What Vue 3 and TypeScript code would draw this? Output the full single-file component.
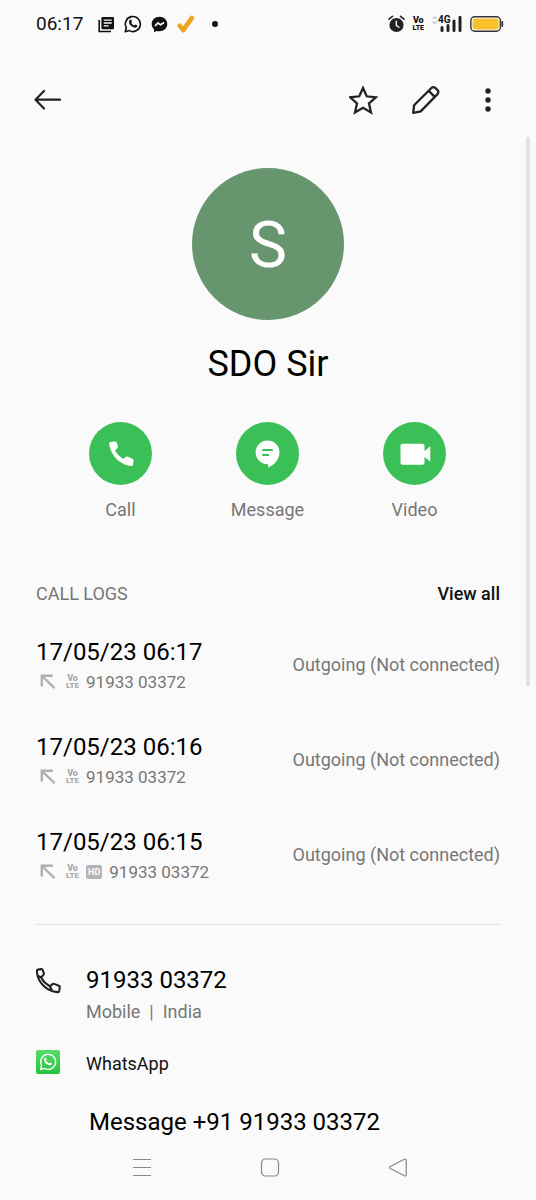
<script setup lang="ts">
interface CallLog {
  id: number
  time: string
  number: string
  hd: boolean
  result: string
}

const contact = { name: 'SDO Sir', initial: 'S', number: '91933 03372', kind: 'Mobile', region: 'India' }

const logs: CallLog[] = [
  { id: 1, time: '17/05/23 06:17', number: '91933 03372', hd: false, result: 'Outgoing (Not connected)' },
  { id: 2, time: '17/05/23 06:16', number: '91933 03372', hd: false, result: 'Outgoing (Not connected)' },
  { id: 3, time: '17/05/23 06:15', number: '91933 03372', hd: true, result: 'Outgoing (Not connected)' },
]
</script>

<template>
  <div class="screen">
    <div class="status">
      <span class="clock">06:17</span>
      <div class="notices">
        <svg width="17" height="17" viewBox="0 0 17 17" aria-hidden="true">
          <path d="M1.2 4v11.5H13" fill="none" stroke="#111" stroke-width="1.6" />
          <rect x="3.4" y="1" width="12.6" height="12.2" rx="1" fill="#111" />
          <path d="M5.7 4.2h8M5.7 7h8M5.7 9.8h5" stroke="#fafafa" stroke-width="1.3" />
        </svg>
        <svg width="18" height="18" viewBox="0 0 18 18" aria-hidden="true">
          <path d="M1.2 16.8l1.1-4.1a7.5 7.5 0 1 1 2.9 2.9z" fill="none" stroke="#111" stroke-width="1.6" stroke-linejoin="round" />
          <path d="M6.1 4.8c.5-.4 1-.3 1.2.2l.6 1.4c.1.4-.6 1-.6 1.3.7 1.4 1.7 2.2 3 2.8.4 0 .9-1 1.3-.9l1.6.8c.3.3.1 1.2-.4 1.7-1.2 1-3 .8-4.8-.5C6.2 10.300 5 8.600 5 7c0-.9.5-1.7 1.1-2.2z" fill="#111" />
        </svg>
        <svg width="17" height="17" viewBox="0 0 17 17" aria-hidden="true">
          <path d="M8.5.8C4 .8.7 4 .7 8.100c0 2.200.9 4.100 2.400 5.400v2.800l2.600-1.400c.9.3 1.8.4 2.800.4 4.400 0 7.800-3.100 7.800-7.200S12.900.8 8.500.8z" fill="#111" />
          <path d="M4 10l3-3.200 2.500 2 3.600-2.300" fill="none" stroke="#fafafa" stroke-width="1.7" stroke-linejoin="round" />
        </svg>
        <svg width="18" height="18" viewBox="0 0 18 18" aria-hidden="true">
          <path d="M2.700 10.700l3.500 4.500L14.800 3" fill="none" stroke="#f0a31c" stroke-width="4.600" stroke-linecap="round" stroke-linejoin="round" />
        </svg>
        <span class="dot"></span>
      </div>
      <div class="device">
        <svg width="17" height="18" viewBox="0 0 17 18" aria-hidden="true">
          <circle cx="8.5" cy="10" r="7.100" fill="#222" />
          <path d="M1 4.200L4.500 1.300M16 4.200l-3.500-2.900" stroke="#222" stroke-width="1.600" stroke-linecap="round" />
          <path d="M8.300 6.300v4l2.600 2" fill="none" stroke="#fafafa" stroke-width="1.400" stroke-linecap="round" />
        </svg>
        <span class="volte"><span class="vo">Vo</span><span>LTE</span></span>
        <span class="signal">
          <svg width="30" height="18" viewBox="0 0 30 18" aria-hidden="true">
            <path d="M.8 4l2-2 2 2M.8 6.500l2 2 2-2" fill="none" stroke="#c4c4c4" stroke-width="1.100" />
            <path d="M10 12.500v3M16 10.500v5M22 6v9.500M28 2.200v13.300" stroke="#222" stroke-width="3" stroke-linecap="round" />
          </svg>
          <span class="network">4G</span>
        </span>
        <svg width="34" height="16" viewBox="0 0 34 16" aria-hidden="true">
          <rect x=".8" y=".8" width="29.600" height="14.400" rx="4" fill="#fafafa" stroke="#333" stroke-width="1.400" />
          <rect x="2.600" y="2.600" width="26" height="10.800" rx="2.400" fill="#fbc02d" />
          <path d="M32.300 6v4" stroke="#333" stroke-width="1.800" stroke-linecap="round" />
        </svg>
      </div>
    </div>

    <header class="toolbar">
      <button class="tool" type="button" aria-label="Back">
        <svg width="28" height="28" viewBox="0 0 28 28">
          <path d="M27 13.700H3M11 5L2.500 13.700l8.500 8.700" fill="none" stroke="#222" stroke-width="2.200" stroke-linecap="round" stroke-linejoin="round" />
        </svg>
      </button>
      <div class="tools">
        <button class="tool" type="button" aria-label="Add to favourites">
          <svg width="30" height="30" viewBox="1 0 30 30">
            <path d="M15 3l3.700 8.300 9.100 1-6.800 6.100 2 9L15 22.800l-8 4.600 2-9-6.800-6.100 9.100-1z" fill="none" stroke="#222" stroke-width="2.300" />
          </svg>
        </button>
        <button class="tool" type="button" aria-label="Edit contact">
          <svg width="30" height="30" viewBox="0 0 30 30">
            <path d="M2.200 27.800l.9-7.500L20.400 3q2-1.700 4 0l2.100 2.100q1.700 2 0 4L9.700 26.400zM17.700 5.900l6 6" fill="none" stroke="#222" stroke-width="2.300" stroke-linejoin="round" />
          </svg>
        </button>
        <button class="tool" type="button" aria-label="More options">
          <svg width="30" height="30" viewBox="0 0 30 30" fill="#222">
            <circle cx="15" cy="6" r="2.700" /><circle cx="15" cy="15" r="2.700" /><circle cx="15" cy="24" r="2.700" />
          </svg>
        </button>
      </div>
    </header>

    <main class="content">
      <div class="avatar" aria-hidden="true">{{ contact.initial }}</div>
      <h1 class="name">{{ contact.name }}</h1>

      <div class="actions">
        <button class="action" type="button">
          <span class="disc">
            <svg width="30" height="30" viewBox="0 0 30 30" aria-hidden="true">
              <path d="M3.200 4.800c-.2-1.300.3-1.800 1.500-1.900l4-.4c1.200 0 1.800.5 2.200 1.600l.9 3c.3 1 0 1.800-.7 2.500l-2 2c2 3.600 4.600 6.200 8 8.300l2.800-2c.8-.5 1.500-.5 2.300-.1l4.500 2.200c.8.5 1 1 .9 1.900l-.5 3.600c-.2 1-.7 1.500-1.800 1.400C14.500 26.400 4.500 16.500 3.200 4.800z" fill="#fff" />
            </svg>
          </span>
          <span>Call</span>
        </button>
        <button class="action" type="button">
          <span class="disc">
            <svg width="30" height="30" viewBox="0 0 30 30" aria-hidden="true">
              <path d="M14.500 1.500A11.800 11.800 0 0 0 14.500 25.200h.7v3.300c6.200-2.500 11.300-8.200 11.300-15.200A11.900 11.900 0 0 0 14.500 1.500z" fill="#fff" />
              <path d="M9.200 11H19.800M9.200 16h6.800" stroke="#3bc057" stroke-width="2.200" />
            </svg>
          </span>
          <span>Message</span>
        </button>
        <button class="action" type="button">
          <span class="disc">
            <svg width="32" height="30" viewBox="0 0 32 30" aria-hidden="true">
              <rect x="1.500" y="4.800" width="24" height="21" rx="2" fill="#fff" />
              <path d="M25 12.500l6.300-5.300v15.600L25 17.500z" fill="#fff" />
            </svg>
          </span>
          <span>Video</span>
        </button>
      </div>

      <section class="logs">
        <div class="logs-head">
          <h2>CALL LOGS</h2>
          <a href="#all">View all</a>
        </div>
        <ul class="log-list">
          <li v-for="log in logs" :key="log.id" class="log">
            <div>
              <div class="primary">{{ log.time }}</div>
              <div class="meta">
                <svg class="direction" width="16" height="16" viewBox="0 0 16 16" aria-hidden="true">
                  <path d="M1.800 12.500V1.800h11M2 2l12.500 12.200" fill="none" stroke="#b0b0b0" stroke-width="2.400" />
                </svg>
                <span class="volte muted"><span class="vo">Vo</span><span>LTE</span></span>
                <span v-if="log.hd" class="hd">HD</span>
                <span>{{ log.number }}</span>
              </div>
            </div>
            <span class="result">{{ log.result }}</span>
          </li>
        </ul>
      </section>

      <section class="numbers">
        <a class="entry" href="tel:9193303372">
          <svg class="handset" width="26" height="26" viewBox="1 1 27 27" aria-hidden="true">
            <path d="M1.900 4.400c-.1-1 .3-1.500 1.200-1.700l3.200-.5c1-.1 1.500.2 1.800 1.100l1 3.200c.2.800 0 1.400-.5 1.900L6.200 10.700c2 4 5.100 7.100 9.300 9.200l2.700-2.200c.5-.4 1-.4 1.600-.2l4.900 2c.8.300 1.100.8 1 1.600l-.6 3.700c-.2 1-.7 1.300-1.600 1.200C11.700 25.100 2.600 15.800 1.900 4.400zM2.800 9l3.400 1.700M15.500 19.900l2 4.500" fill="none" stroke="#222" stroke-width="2.200" stroke-linejoin="round" />
          </svg>
          <span class="entry-text">
            <span class="primary">{{ contact.number }}</span>
            <span class="detail">{{ contact.kind }}&nbsp; |&nbsp; {{ contact.region }}</span>
          </span>
        </a>
        <div class="entry app">
          <svg width="24" height="24" viewBox="0 0 24 24" aria-hidden="true">
            <defs>
              <linearGradient id="wa" x1="0" y1="0" x2="0" y2="1">
                <stop offset="0" stop-color="#56dc68" /><stop offset="1" stop-color="#24c33f" />
              </linearGradient>
            </defs>
            <rect width="24" height="24" rx="2" fill="url(#wa)" />
            <path d="M4.500 19.500l1.100-4A7.500 7.500 0 1 1 8.500 18.400z" fill="none" stroke="#fff" stroke-width="1.300" stroke-linejoin="round" />
            <path d="M9 7.700c.4-.3.9-.2 1.100.2l.6 1.400c.1.4-.6.9-.6 1.200.7 1.300 1.600 2.100 2.900 2.700.4 0 .9-.9 1.200-.8l1.600.8c.2.3 0 1.100-.4 1.500-1.200 1-2.900.8-4.600-.5C9 12.900 8 11.300 8 9.800c0-.9.4-1.700 1-2.100z" fill="#fff" />
          </svg>
          <span class="app-name">WhatsApp</span>
        </div>
        <a class="message" href="#message">Message +91 {{ contact.number }}</a>
      </section>
    </main>

    <nav class="system-nav" aria-label="System">
      <button type="button" aria-label="Recent apps">
        <svg width="20" height="20" viewBox="0 0 20 20"><path d="M1 1.500h18M1 9.500h18M1 17.500h18" stroke="#888" stroke-width="1.200" /></svg>
      </button>
      <button type="button" aria-label="Home">
        <svg width="20" height="20" viewBox="0 0 20 20"><rect x="1.500" y="1" width="17" height="17" rx="4" fill="none" stroke="#888" stroke-width="1.200" /></svg>
      </button>
      <button type="button" aria-label="Go back">
        <svg width="20" height="20" viewBox="0 0 20 20"><path d="M2.300 8.500q-1.600 1 0 2l14 7.300q2 .7 2-1.300V2.500q0-2-2-1.300z" fill="none" stroke="#888" stroke-width="1.200" /></svg>
      </button>
    </nav>

    <div class="scrollbar"></div>
  </div>
</template>

<style>
body {
  background: #fafafa;
}
</style>

<style scoped>
.screen {
  position: relative;
  display: flex;
  flex-direction: column;
  min-height: 100vh;
  box-sizing: border-box;
  background: #fafafa;
  color: #111;
  font-family: Roboto, "Liberation Sans", sans-serif;
  font-size: 18px;
  line-height: 24px;
}

svg {
  display: block;
  flex: none;
}

button {
  padding: 0;
  border: 0;
  background: none;
  color: inherit;
  font: inherit;
  cursor: pointer;
}

a {
  color: inherit;
  text-decoration: none;
}

h1,
h2 {
  margin: 0;
  font-weight: 400;
}

.status {
  display: flex;
  align-items: center;
  height: 48px;
  padding: 0 32px 0 36px;
}

.clock {
  font-size: 19px;
}

.notices {
  display: flex;
  align-items: center;
  gap: 9px;
  margin-left: 15px;
}

.dot {
  width: 6px;
  height: 6px;
  margin-left: 8px;
  border-radius: 50%;
  background: #111;
}

.device {
  display: flex;
  align-items: center;
  gap: 8px;
  margin-left: auto;
}

.volte {
  display: flex;
  flex-direction: column;
  align-items: center;
  font-size: 7px;
  font-weight: 900;
  line-height: 8px;
}

.vo {
  font-size: 9px;
}

.signal {
  position: relative;
}

.network {
  position: absolute;
  top: 0;
  left: 6px;
  background: #fafafa;
  font-size: 10px;
  font-weight: 700;
  line-height: 9px;
}

.toolbar {
  display: flex;
  align-items: center;
  justify-content: space-between;
  height: 104px;
  padding: 0 33px;
}

.tools {
  display: flex;
  gap: 32px;
}

.content {
  flex: 1;
}

.avatar {
  display: flex;
  align-items: center;
  justify-content: center;
  width: 152px;
  height: 152px;
  margin: 16px auto 0;
  padding-top: 4px;
  box-sizing: border-box;
  border-radius: 50%;
  background: #67956d;
  color: #fff;
  font-size: 64px;
}

.name {
  margin-top: 22px;
  color: #000;
  font-size: 36px;
  line-height: 44px;
  text-align: center;
}

.actions {
  display: grid;
  grid-template-columns: repeat(3, 1fr);
  margin-top: 36px;
  padding: 0 48px 0 47px;
}

.action {
  display: flex;
  flex-direction: column;
  align-items: center;
  gap: 13px;
  color: #777;
}

.disc {
  display: flex;
  align-items: center;
  justify-content: center;
  width: 63px;
  height: 63px;
  border-radius: 50%;
  background: #3bc057;
}

.logs {
  margin: 60px 36px 0;
  padding-bottom: 40px;
  border-bottom: 1px solid #e2e2e2;
}

.logs-head {
  display: flex;
  justify-content: space-between;
}

.logs-head h2 {
  color: #777;
  font-size: 18px;
}

.logs-head a {
  font-weight: 500;
}

.log-list {
  display: flex;
  flex-direction: column;
  gap: 37px;
  margin: 30px 0 0;
  padding: 0;
  list-style: none;
}

.log {
  display: flex;
  align-items: center;
  justify-content: space-between;
}

.primary {
  color: #000;
  font-size: 24px;
  line-height: 32px;
}

.meta {
  display: flex;
  align-items: center;
  gap: 7px;
  margin-top: 2px;
  color: #777;
  font-size: 17px;
}

.direction {
  margin: 0 3px 0 4px;
}

.muted {
  color: #aaa;
  font-size: 8px;
}

.hd {
  padding: 0 2px;
  border-radius: 2px;
  background: #b5b5b5;
  color: #fafafa;
  font-size: 9px;
  font-weight: 700;
  line-height: 14px;
}

.result,
.detail {
  color: #777;
}

.numbers {
  display: flex;
  flex-direction: column;
  padding: 39px 36px 0;
}

.entry {
  display: grid;
  grid-template-columns: 50px 1fr;
}

.handset {
  margin-top: 4px;
}

.entry-text {
  display: flex;
  flex-direction: column;
  gap: 4px;
}

.app {
  margin-top: 26px;
}

.app-name {
  padding-top: 2px;
}

.message {
  margin: 32px 0 0 53px;
  color: #000;
  font-size: 24px;
  line-height: 28px;
}

.system-nav {
  display: grid;
  grid-template-columns: repeat(3, 1fr);
  flex: none;
  height: 64px;
  padding: 0 74px 0 78px;
}

.system-nav button {
  display: flex;
  align-items: center;
  justify-content: center;
}

.scrollbar {
  position: absolute;
  top: 137px;
  right: 6px;
  width: 4px;
  height: 549px;
  background: #e2e2e2;
}
</style>
